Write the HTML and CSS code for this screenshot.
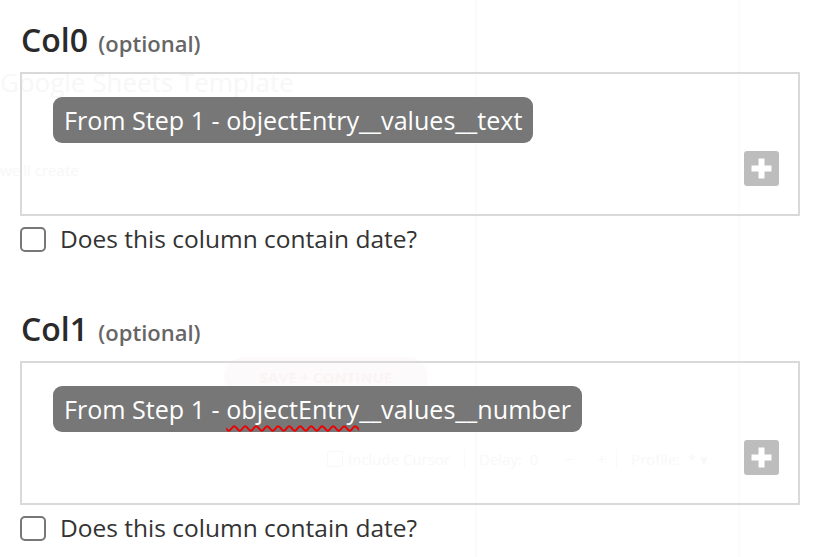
FILE: index.html
```html
<!DOCTYPE html>
<html>
<head>
<meta charset="utf-8">
<link rel="stylesheet" href="styles.css">
</head>
<body>
<div class="ghost" aria-hidden="true">
  <div class="g-line g-l1"></div>
  <div class="g-line g-l2"></div>
  <div class="g-title">Google Sheets Template</div>
  <div class="g-small">we'll create</div>
  <div class="g-pill">SAVE + CONTINUE</div>
  <div class="g-tool"><span class="g-box"></span>Include Cursor <span class="g-sep">Delay:&nbsp; 0 &nbsp;&nbsp;&nbsp;&nbsp;&nbsp; −&nbsp;&nbsp;&nbsp;&nbsp;&nbsp; +</span> <span class="g-sep">Profile: &nbsp;* ▾</span></div>
</div>
<div class="form">
  <section class="field">
    <h2 class="label">Col0 <span class="opt">(optional)</span></h2>
    <div class="box">
      <span class="chip">From Step 1 - objectEntry__values__text</span>
      <button class="plus" aria-label="add">
        <svg width="35" height="35" viewBox="0 0 35 35"><path d="M14.5 7.5h6v7H27.5v6h-7V27.5h-6v-7H7.5v-6h7z" fill="#fff"/></svg>
      </button>
    </div>
    <label class="check"><span class="cb"></span>Does this column contain date?</label>
  </section>
  <section class="field second">
    <h2 class="label">Col1 <span class="opt">(optional)</span></h2>
    <div class="box">
      <span class="chip">From Step 1 - <span class="spell">objectEntry</span>__values__number</span>
      <button class="plus" aria-label="add">
        <svg width="35" height="35" viewBox="0 0 35 35"><path d="M14.5 7.5h6v7H27.5v6h-7V27.5h-6v-7H7.5v-6h7z" fill="#fff"/></svg>
      </button>
    </div>
    <label class="check"><span class="cb"></span>Does this column contain date?</label>
  </section>
</div>
</body>
</html>
```
FILE: styles.css
```css
html, body {
  margin: 0;
  padding: 0;
  background: #fff;
}
body {
  font-family: "Open Sans", "Noto Sans", sans-serif;
  color: #333;
  width: 818px;
  height: 557px;
  overflow: hidden;
  position: relative;
}
.ghost {
  position: absolute;
  inset: 0;
  z-index: 0;
  color: #f6f6f6;
}
.g-line {
  position: absolute;
  top: 0;
  bottom: 0;
  width: 2px;
  background: #fbfbfb;
}
.g-l1 { left: 475px; }
.g-l2 { left: 738px; }
.g-title {
  position: absolute;
  left: 0;
  top: 64px;
  font-size: 26px;
  color: #f7f7f7;
}
.g-small {
  position: absolute;
  left: 0;
  top: 160px;
  font-size: 15px;
  color: #f7f7f7;
}
.g-pill {
  position: absolute;
  left: 224px;
  top: 357px;
  width: 204px;
  height: 40px;
  border-radius: 20px;
  background: #fdfafb;
  color: #faf4f5;
  font-size: 15px;
  font-weight: 700;
  text-align: center;
  line-height: 40px;
}
.g-tool {
  position: absolute;
  left: 327px;
  top: 449px;
  font-size: 15px;
  color: #f8f8f8;
  display: flex;
  align-items: center;
  white-space: pre;
}
.g-box {
  width: 14px;
  height: 14px;
  border: 1px solid #f8f8f8;
  border-radius: 2px;
  margin-right: 5px;
}
.g-sep {
  border-left: 1px solid #fafafa;
  padding-left: 14px;
  margin-left: 10px;
}
.form {
  position: relative;
  z-index: 1;
  padding: 20px 18px 0 20px;
}
.field {
  display: flex;
  flex-direction: column;
}
.second {
  margin-top: 57px;
}
.label {
  margin: 0 0 12px 1px;
  font-size: 32px;
  font-weight: 600;
  color: #2a2a2a;
  line-height: 40px;
  height: 40px;
  letter-spacing: 0;
}
.opt {
  font-size: 22px;
  line-height: 20px;
  color: #666;
  font-weight: 600;
  margin-left: 2px;
}
.box {
  box-sizing: border-box;
  height: 144px;
  border: 2px solid #d9d9d9;
  padding: 23px 19px 28px 31px;
  display: flex;
  flex-direction: column;
  align-items: flex-start;
  background: transparent;
}
.chip {
  background: #777;
  color: #fff;
  border-radius: 9px;
  font-size: 25.1px;
  line-height: 46px;
  height: 46px;
  padding: 0 11px;
  white-space: nowrap;
}
.spell {
  text-decoration: underline wavy #e00;
  text-decoration-thickness: 1.5px;
  text-underline-offset: 6px;
}
.plus {
  margin-top: auto;
  align-self: flex-end;
  width: 35px;
  height: 35px;
  padding: 0;
  border: 0;
  border-radius: 3px;
  background: #bdbdbd;
  display: flex;
}
.check {
  margin-top: 10px;
  display: flex;
  align-items: center;
  font-size: 24.5px;
  color: #333;
  line-height: 26px;
}
.cb {
  box-sizing: border-box;
  width: 26px;
  height: 25px;
  border: 2px solid #777;
  border-radius: 5px;
  margin-right: 14px;
  margin-left: 0;
  background: #fff;
}
```
